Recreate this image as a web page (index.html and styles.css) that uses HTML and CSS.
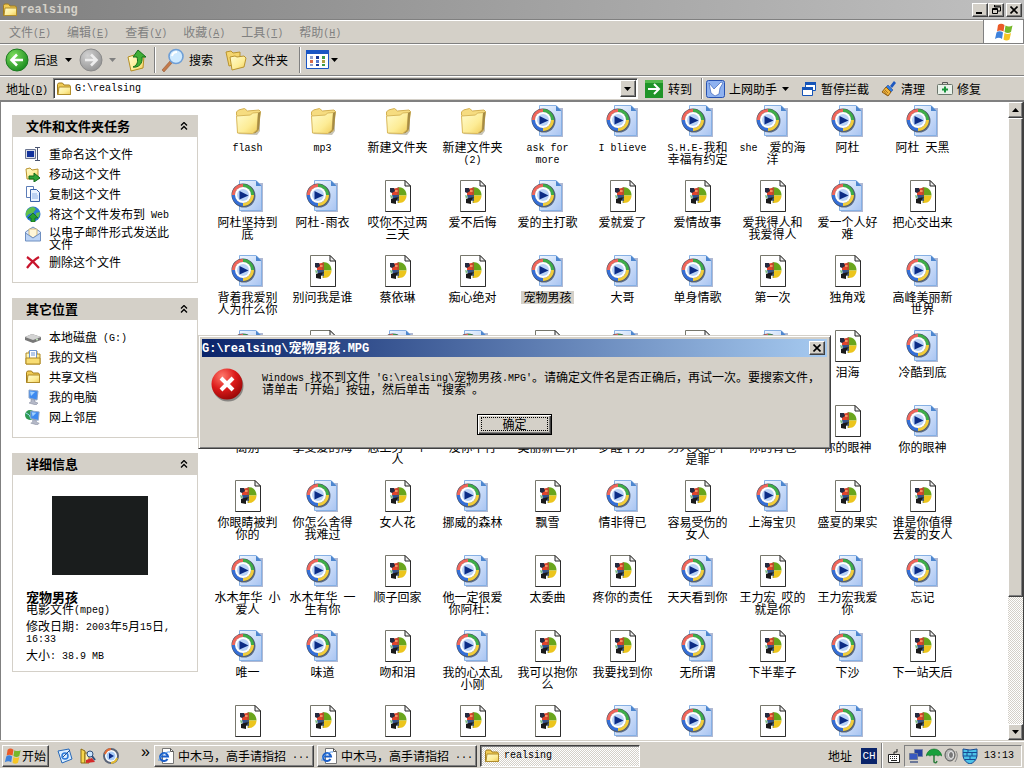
FILE: index.html
```html
<!DOCTYPE html>
<html lang="zh-CN">
<head>
    <meta charset="UTF-8">
    <meta name="viewport" content="width=device-width, initial-scale=1.0">
    <title>realsing</title>
    <link rel="stylesheet" href="styles.css">
</head>
<body>
    <!-- 图标 -->
    <svg class="sprite" aria-hidden="true">
        <defs>
            <linearGradient id="g-folder" x1="0" y1="0" x2="1" y2="1">
                <stop offset="0" stop-color="#fffcd0"/><stop offset="0.6" stop-color="#fdec95"/><stop offset="1" stop-color="#efcb58"/>
            </linearGradient>
            <linearGradient id="g-page" x1="0" y1="0" x2="1" y2="1">
                <stop offset="0" stop-color="#f0f7ff"/><stop offset="1" stop-color="#a9c4f2"/>
            </linearGradient>
            <radialGradient id="g-green" cx="0.35" cy="0.3" r="0.8">
                <stop offset="0" stop-color="#7ddc5c"/><stop offset="1" stop-color="#13861a"/>
            </radialGradient>
            <radialGradient id="g-gray" cx="0.35" cy="0.3" r="0.8">
                <stop offset="0" stop-color="#d2d2d2"/><stop offset="1" stop-color="#8f8f8f"/>
            </radialGradient>
            <radialGradient id="g-red" cx="0.35" cy="0.25" r="0.85">
                <stop offset="0" stop-color="#ff7a6c"/><stop offset="0.5" stop-color="#dc1a1a"/><stop offset="1" stop-color="#8c0404"/>
            </radialGradient>
        </defs>
        <symbol id="folder" viewBox="0 0 32 32">
            <path d="M7 29l19 1 3-4V9z" fill="#8f8a70" opacity=".5"/>
            <path d="M5.500 10V7l2-2 6-1.500 3 2.500 11.500-1 1.500 1.500L27 26l-5 2z" fill="#f6dc80" stroke="#d3b052"/>
            <path d="M5.500 11l14-1 2-2 6-.5L26 25l-4.500 3.500-15-.5z" fill="url(#g-folder)" stroke="#d9b85a"/>
            <path d="M27 8l2.500-1.500L28 24l-3.500 4-2 .5L26 25z" fill="#a58b45"/>
        </symbol>
        <symbol id="wmv" viewBox="0 0 32 32">
            <path d="M10 3h22v29H10z" fill="#6f7fae" opacity=".55"/>
            <path d="M8.500.5H25l5.500 5.500v24.500h-22z" fill="url(#g-page)" stroke="#86b0e4"/>
            <path d="M25 .5V6h5.500z" fill="#4d86cf"/>
            <circle cx="13" cy="16" r="11.500" fill="#27344c" opacity=".65"/>
            <circle cx="12" cy="15" r="11.500" fill="#465062"/>
            <g fill="none" stroke-width="3">
                <path d="M2.500 15A9.500 9.500 0 0 1 12 5.500" stroke="#f0655a"/>
                <path d="M12 5.500A9.500 9.500 0 0 1 21.500 15" stroke="#3eae48"/>
                <path d="M21.500 15A9.500 9.500 0 0 1 12 24.500" stroke="#f2cd3a"/>
                <path d="M12 24.500A9.500 9.500 0 0 1 2.500 15" stroke="#356fd8"/>
            </g>
            <circle cx="12" cy="15" r="8" fill="#fff"/>
            <circle cx="12" cy="15" r="6" fill="#b9d3f8"/>
            <path d="M8.500 11l9 4.500-9 4z" fill="#0c2c86"/>
        </symbol>
        <symbol id="mpg" viewBox="0 0 32 32">
            <path d="M4.500.5H24l5.500 5.500v25.500h-25z" fill="#fff" stroke="#77776c"/>
            <path d="M29.500 6v25.500h-25" fill="none" stroke="#2d2d2d"/>
            <path d="M24 .5V6h5.500z" fill="#eee" stroke="#222"/>
            <path d="M17 7.500c5-1 8.500 3 8.500 8H17z" fill="#69a51c"/>
            <path d="M17 15.500h8.500c0 4-3 8-8.500 7.500z" fill="#ecc51d"/>
            <path d="M11 9l7-1.500v7.500h-7z" fill="#e0452c"/>
            <path d="M11 15h7v6l-6-1z" fill="#35528e"/>
            <path d="M9 8h4l1 3-3 2-2-1z" fill="#242a40"/>
            <path d="M10 19l3-1 5-1-3 4v3l-5-1z" fill="#191919"/>
            <path d="M9 15l3 1-2 3z" fill="#7bbf7f"/>
            <path d="M14 10h3v2h-3z" fill="#ff8c62"/>
            <path d="M17 7v16" stroke="#5a6a30" stroke-width=".6"/>
        </symbol>
        <symbol id="dir" viewBox="0 0 16 16">
            <path d="M1.500 13.500v-10l1-1.500h4l1.500 2h5.500l1 1.500v8z" fill="#f0cb55" stroke="#a27c1b"/>
            <path d="M2 13.500l1-7.500h11.500v7.500z" fill="url(#g-folder)" stroke="#b18d2b"/>
        </symbol>
        <symbol id="winlogo" viewBox="0 0 20 20">
            <path d="M4 3q3-2.500 6.500 0L9.500 9.500Q6 7.500 3 9.500z" fill="#ea5a28"/>
            <path d="M11.500 3.500q3.500 2 7 0l-1.500 6.500q-3 2-6.500 0z" fill="#76b82a"/>
            <path d="M2.500 10.500q3-2.500 6.500 0l-1 6.500Q5 14.500 1 17z" fill="#3e82dc"/>
            <path d="M10.500 11q3 2 6.500 0l-1.500 6.500q-3 2-6 0z" fill="#f6c524"/>
        </symbol>
        <symbol id="down" viewBox="0 0 7 4"><path d="M0 0h7L3.500 4z" fill="currentColor"/></symbol>
        <symbol id="cross" viewBox="0 0 8 8"><path d="M.5.5l7 7M7.500.5l-7 7" stroke="#000" stroke-width="1.600"/></symbol>
        <symbol id="chevrons" viewBox="0 0 8 8"><path d="M1 3.500l3-3 3 3M1 7.500l3-3 3 3" fill="none" stroke="#000" stroke-width="1.300"/></symbol>
        <symbol id="ie" viewBox="0 0 16 16">
            <path d="M4.500.5h8l3 3v12h-11z" fill="#fff" stroke="#777"/>
            <path d="M12.500.5v3h3" fill="none" stroke="#555"/>
            <path d="M9.500 11A4 4 0 1 1 10 8.500H3" fill="none" stroke="#1b5fc9" stroke-width="2"/>
            <path d="M1 13C0 9 8 3 12 4" fill="none" stroke="#4c94ea"/>
        </symbol>
        <symbol id="monitor" viewBox="0 0 16 16">
            <path d="M4 1l9 1-1 9-8-2z" fill="#3d8af0" stroke="#8ea6c8"/>
            <path d="M5 2.500l5 .5-4 4z" fill="#9fd0ff"/>
            <path d="M6 10l4 1v2l3 1-2 2-7-2 2-1z" fill="#b4b9c8" stroke="#7c8296" stroke-width=".5"/>
        </symbol>
    </svg>

    <!-- 标题栏 -->
    <header class="titlebar">
        <svg class="i16"><use href="#dir"/></svg>
        <h1>realsing</h1>
        <div class="winbtns">
            <button class="winbtn" aria-label="最小化"><svg width="8" height="8"><path d="M0 6h6v2H0z"/></svg></button>
            <button class="winbtn" aria-label="还原"><svg width="9" height="9"><path d="M2.500 0v2h6v4H6M2 1h7" fill="none" stroke="#000"/><path d="M.5 3.500h5v5h-5zM0 4.500h6" fill="none" stroke="#000"/></svg></button>
            <button class="winbtn winclose" aria-label="关闭"><svg width="8" height="8"><use href="#cross"/></svg></button>
        </div>
    </header>

    <!-- 菜单栏 -->
    <nav class="menubar">
        <button>文件<span class="lat">(<u>F</u>)</span></button>
        <button>编辑<span class="lat">(<u>E</u>)</span></button>
        <button>查看<span class="lat">(<u>V</u>)</span></button>
        <button>收藏<span class="lat">(<u>A</u>)</span></button>
        <button>工具<span class="lat">(<u>T</u>)</span></button>
        <button>帮助<span class="lat">(<u>H</u>)</span></button>
        <div class="brand"><svg width="22" height="20"><use href="#winlogo"/></svg></div>
    </nav>

    <!-- 工具栏 -->
    <div class="toolbar">
        <button class="tool back">
            <svg width="24" height="24"><circle cx="12" cy="12" r="11" fill="url(#g-green)" stroke="#1c7a20"/><path d="M18 12H7M12 6.500L6.500 12l5.500 5.500" fill="none" stroke="#fff" stroke-width="2.600"/></svg>
            后退
            <svg class="arrow"><use href="#down"/></svg>
        </button>
        <button class="tool forward" aria-label="前进">
            <svg width="24" height="24"><circle cx="12" cy="12" r="11" fill="url(#g-gray)" stroke="#8a8a8a"/><path d="M6 12h11M12 6.500l5.500 5.500-5.500 5.500" fill="none" stroke="#eee" stroke-width="2.600"/></svg>
            <svg class="arrow"><use href="#down"/></svg>
        </button>
        <button class="tool up" aria-label="向上">
            <svg width="22" height="24"><path d="M2 9l6-2 2 2 8-1-1 12-12 3z" fill="url(#g-folder)" stroke="#b58e22"/><path d="M7 19c5-2 5-6 4-10H7l5-7 8 7h-4c1 6-3 11-9 10z" fill="#3fae35" stroke="#13701a"/></svg>
        </button>
        <span class="sep"></span>
        <button class="tool search">
            <svg width="24" height="24"><path d="M1 22l8-9 2 2-8 9z" fill="#c47a4a" stroke="#8a4f2c" stroke-width=".5"/><circle cx="15" cy="8.500" r="7" fill="#cfeaff" stroke="#6f9fd6" stroke-width="1.600"/><path d="M11 8q1-4 5-4" fill="none" stroke="#fff" stroke-width="2"/></svg>
            搜索
        </button>
        <button class="tool folders">
            <svg width="22" height="22"><path d="M1 3l5-1 2 2 7-1v11L4 17z" fill="#f4d56e" stroke="#b9932e"/><path d="M5 8l5-1 2 1 7-1 2 2-2 9-12 3z" fill="url(#g-folder)" stroke="#b9932e"/></svg>
            文件夹
        </button>
        <span class="sep"></span>
        <button class="tool views" aria-label="查看">
            <svg width="24" height="20"><path d="M.5.5h22v18H.5z" fill="#fff" stroke="#1a56c4"/><path d="M0 0h23v4H0z" fill="#1a56c4"/><path d="M4 6h3v3H4zM4 14h3v2H4z" fill="#8ca0d0"/><path d="M4 10h3v3H4z" fill="#d86a4a"/><path d="M10 6h3v3h-3zM10 14h3v2h-3z" fill="#1a3a9a"/><path d="M10 10h3v3h-3z" fill="#5577c9"/><path d="M16 6h3v3h-3zM16 14h3v2h-3z" fill="#3a9a4a"/><path d="M16 10h3v3h-3z" fill="#b0a040"/></svg>
            <svg class="arrow"><use href="#down"/></svg>
        </button>
    </div>

    <!-- 地址栏 -->
    <div class="addressbar">
        <label for="address">地址<span class="lat">(<u>D</u>)</span></label>
        <div class="address-box">
            <svg class="i16"><use href="#dir"/></svg>
            <input type="text" id="address" value="G:\realsing">
            <button class="drop" aria-label="展开"><svg class="arrow"><use href="#down"/></svg></button>
        </div>
        <button class="tool go">
            <svg width="18" height="18"><path d="M0 0h18v18H0z" fill="#1f9428"/><path d="M0 0h18v3H0z" fill="#54b84d"/><path d="M3 9h11M9 4l5 5-5 5" fill="none" stroke="#fff" stroke-width="2"/></svg>
            转到
        </button>
        <span class="sep"></span>
        <button class="tool helper">
            <svg width="19" height="18"><rect x=".5" y=".5" width="18" height="17" rx="2" fill="#8fb2f0" stroke="#2852b0"/><path d="M3 3l5 6 7-7 2 1-3 5-1 6-4 2-4-3z" fill="#fff" stroke="#2852b0" stroke-width=".6"/></svg>
            上网助手
            <svg class="arrow"><use href="#down"/></svg>
        </button>
        <button class="tool">
            <svg class="i16"><path d="M4.500 1.500h10v8h-10z" fill="#fff" stroke="#1554b8"/><path d="M4 1h11v3H4z" fill="#1554b8"/><path d="M1.500 6.500h10v8h-10z" fill="#fff" stroke="#1554b8"/><path d="M1 6h11v3H1z" fill="#1554b8"/></svg>
            暂停拦截
        </button>
        <button class="tool">
            <svg class="i16"><path d="M13 0l2 2-4 5-2-2z" fill="#1d58c0"/><path d="M7 4l5 5-2 2-5-5z" fill="#2f7be0" stroke="#143f94" stroke-width=".5"/><path d="M5 6l5 5-3 4L1 11z" fill="#f0b43c" stroke="#8b5a12"/><path d="M4 9l3 3M3 10l3 4" stroke="#8b5a12" stroke-width=".7"/></svg>
            清理
        </button>
        <button class="tool">
            <svg class="i16"><path d="M5.500 3V1.500h5V3" fill="none" stroke="#555"/><rect x=".5" y="3.500" width="15" height="10" rx="1" fill="#e9f2ea" stroke="#6b756b"/><path d="M8 5.500v6M5 8.500h6" stroke="#18943a" stroke-width="2"/></svg>
            修复
        </button>
    </div>

    <main class="content">
        <!-- 左侧任务面板 -->
        <aside class="sidebar">
            <section class="panel">
                <h2>文件和文件夹任务 <svg width="8" height="8"><use href="#chevrons"/></svg></h2>
                <ul>
                    <li><svg class="i16"><path d="M.5 3.500h10v9H.5z" fill="#d8dce8" stroke="#6c7690"/><path d="M2 5h7v6H2z" fill="#12329c"/><path d="M10 1.500h5M12.500 2v12M10 14.500h5" stroke="#4a5470"/></svg><a href="#">重命名这个文件</a></li>
                    <li><svg class="i16"><path d="M1 3l4-1 2 2 6-1v10H2z" fill="url(#g-folder)" stroke="#b9932e"/><path d="M4 10h5V7l6 5-6 4v-3H4z" fill="#2fa336" stroke="#116a18"/></svg><a href="#">移动这个文件</a></li>
                    <li><svg class="i16"><path d="M1.500.5h7v11h-7z" fill="#fff" stroke="#5c7db8"/><path d="M5.500 3.500h6l3 3v9h-9z" fill="#eaf3ff" stroke="#3a62a8"/><path d="M7 8h5M7 10h6M7 12h6" stroke="#8db0e6"/></svg><a href="#">复制这个文件</a></li>
                    <li><svg class="i16"><circle cx="8" cy="8" r="7.500" fill="#2c78d4"/><path d="M3 3q5-4 8 0l-3 4-4 1-3 3Q0 6 3 3zM11 7l4-1q0 4-3 7z" fill="#5fc04c"/><path d="M8 7l5 5h-3v4H6v-4H3z" fill="#27a030" stroke="#0f6417" stroke-width=".7"/></svg><a href="#">将这个文件发布到<span class="lat"> Web</span></a></li>
                    <li><svg class="i16"><path d="M.5 6L8 1l7.500 5v8.500H.5z" fill="#dce8fa" stroke="#6f8fc0"/><path d="M4 3h8v6l-4 3-4-3z" fill="#fff6d8" stroke="#c4a35a" stroke-width=".7"/><path d="M.5 7L8 12l7.500-5v8H.5z" fill="#bcd4f6" stroke="#6f8fc0"/></svg><a href="#">以电子邮件形式发送此文件</a></li>
                    <li><svg class="i16"><path d="M2 3q6 4 12 11M14 3Q7 7 2 14" fill="none" stroke="#c8142c" stroke-width="2.200"/></svg><a href="#">删除这个文件</a></li>
                </ul>
            </section>
            <section class="panel">
                <h2>其它位置 <svg width="8" height="8"><use href="#chevrons"/></svg></h2>
                <ul>
                    <li><svg class="i16"><path d="M0 8l7-3 9 3v3l-8 3-8-3z" fill="#777"/><path d="M0 8l7-3 9 3-8 3z" fill="#d3d3d3"/><circle cx="12" cy="10.500" r="1" fill="#c8e8c0"/></svg><a href="#">本地磁盘<span class="lat"> (G:)</span></a></li>
                    <li><svg class="i16"><path d="M1 4h3V2h8v3h3v10H1z" fill="url(#g-folder)" stroke="#b08a22"/><path d="M4.500 1.500h7v8h-7z" fill="#fff" stroke="#6d95d2"/><path d="M6 4h4M6 6h4" stroke="#6d95d2"/><path d="M1 9h14v6H1z" fill="#f8dd74" stroke="#b08a22"/></svg><a href="#">我的文档</a></li>
                    <li><svg class="i16"><use href="#dir"/></svg><a href="#">共享文档</a></li>
                    <li><svg class="i16"><use href="#monitor"/></svg><a href="#">我的电脑</a></li>
                    <li><svg class="i16"><circle cx="5" cy="6" r="5" fill="#2e9a52"/><path d="M1 4q4 1 5 6" stroke="#9bd8f0" fill="none"/><use href="#monitor" x="2" y="1" width="15" height="15"/></svg><a href="#">网上邻居</a></li>
                </ul>
            </section>
            <section class="panel">
                <h2>详细信息 <svg width="8" height="8"><use href="#chevrons"/></svg></h2>
                <div class="details">
                    <div class="thumb"></div>
                    <h3>宠物男孩</h3>
                    <p>电影文件<span class="lat">(mpeg)</span></p>
                    <p>修改日期<span class="lat">: 2003</span>年<span class="lat">5</span>月<span class="lat">15</span>日<span class="lat">, 16:33</span></p>
                    <p>大小<span class="lat">: 38.9 MB</span></p>
                </div>
            </section>
        </aside>

        <!-- 文件列表 -->
        <ul class="files">
            <li><svg><use href="#folder"/></svg><a href="#"><span class="lat">flash</span></a></li>
            <li><svg><use href="#folder"/></svg><a href="#"><span class="lat">mp3</span></a></li>
            <li><svg><use href="#folder"/></svg><a href="#">新建文件夹</a></li>
            <li><svg><use href="#folder"/></svg><a href="#">新建文件夹 <span class="lat">(2)</span></a></li>
            <li><svg><use href="#wmv"/></svg><a href="#"><span class="lat">ask for more</span></a></li>
            <li><svg><use href="#wmv"/></svg><a href="#"><span class="lat">I blieve</span></a></li>
            <li><svg><use href="#wmv"/></svg><a href="#"><span class="lat">S.H.E-</span>我和幸福有约定</a></li>
            <li><svg><use href="#wmv"/></svg><a href="#"><span class="lat">she&nbsp;&nbsp;</span>爱的海洋</a></li>
            <li><svg><use href="#wmv"/></svg><a href="#">阿杜</a></li>
            <li><svg><use href="#wmv"/></svg><a href="#">阿杜<span class="lat"> </span>天黑</a></li>

            <li><svg><use href="#wmv"/></svg><a href="#">阿杜坚持到底</a></li>
            <li><svg><use href="#wmv"/></svg><a href="#">阿杜<span class="lat">-</span>雨衣</a></li>
            <li><svg><use href="#mpg"/></svg><a href="#">哎你不过两三天</a></li>
            <li><svg><use href="#mpg"/></svg><a href="#">爱不后悔</a></li>
            <li><svg><use href="#wmv"/></svg><a href="#">爱的主打歌</a></li>
            <li><svg><use href="#mpg"/></svg><a href="#">爱就爱了</a></li>
            <li><svg><use href="#mpg"/></svg><a href="#">爱情故事</a></li>
            <li><svg><use href="#mpg"/></svg><a href="#">爱我得人和我爱得人</a></li>
            <li><svg><use href="#wmv"/></svg><a href="#">爱一个人好难</a></li>
            <li><svg><use href="#mpg"/></svg><a href="#">把心交出来</a></li>

            <li><svg><use href="#wmv"/></svg><a href="#">背着我爱别人为什么你</a></li>
            <li><svg><use href="#mpg"/></svg><a href="#">别问我是谁</a></li>
            <li><svg><use href="#mpg"/></svg><a href="#">蔡依琳</a></li>
            <li><svg><use href="#mpg"/></svg><a href="#">痴心绝对</a></li>
            <li><svg><use href="#wmv"/></svg><a href="#" class="selected">宠物男孩</a></li>
            <li><svg><use href="#wmv"/></svg><a href="#">大哥</a></li>
            <li><svg><use href="#wmv"/></svg><a href="#">单身情歌</a></li>
            <li><svg><use href="#mpg"/></svg><a href="#">第一次</a></li>
            <li><svg><use href="#mpg"/></svg><a href="#">独角戏</a></li>
            <li><svg><use href="#wmv"/></svg><a href="#">高峰美丽新世界</a></li>

            <li><svg><use href="#wmv"/></svg></li>
            <li><svg><use href="#mpg"/></svg></li>
            <li><svg><use href="#wmv"/></svg></li>
            <li><svg><use href="#wmv"/></svg></li>
            <li><svg><use href="#mpg"/></svg></li>
            <li><svg><use href="#wmv"/></svg></li>
            <li><svg><use href="#mpg"/></svg></li>
            <li><svg><use href="#wmv"/></svg></li>
            <li><svg><use href="#mpg"/></svg><a href="#">泪海</a></li>
            <li><svg><use href="#wmv"/></svg><a href="#">冷酷到底</a></li>

            <li><svg><use href="#mpg"/></svg><a href="#">离别</a></li>
            <li><svg><use href="#mpg"/></svg><a href="#">享受爱的海</a></li>
            <li><svg><use href="#mpg"/></svg><a href="#">恋上另一个人</a></li>
            <li><svg><use href="#mpg"/></svg><a href="#">没你不行</a></li>
            <li><svg><use href="#mpg"/></svg><a href="#">美丽新世界</a></li>
            <li><svg><use href="#mpg"/></svg><a href="#">梦醒十分</a></li>
            <li><svg><use href="#mpg"/></svg><a href="#">男人哭吧不是罪</a></li>
            <li><svg><use href="#mpg"/></svg><a href="#">你的背包</a></li>
            <li><svg><use href="#mpg"/></svg><a href="#">你的眼神</a></li>
            <li><svg><use href="#wmv"/></svg><a href="#">你的眼神</a></li>

            <li><svg><use href="#mpg"/></svg><a href="#">你眼睛被判你的</a></li>
            <li><svg><use href="#wmv"/></svg><a href="#">你怎么舍得我难过</a></li>
            <li><svg><use href="#mpg"/></svg><a href="#">女人花</a></li>
            <li><svg><use href="#wmv"/></svg><a href="#">挪威的森林</a></li>
            <li><svg><use href="#mpg"/></svg><a href="#">飘雪</a></li>
            <li><svg><use href="#wmv"/></svg><a href="#">情非得已</a></li>
            <li><svg><use href="#mpg"/></svg><a href="#">容易受伤的女人</a></li>
            <li><svg><use href="#wmv"/></svg><a href="#">上海宝贝</a></li>
            <li><svg><use href="#mpg"/></svg><a href="#">盛夏的果实</a></li>
            <li><svg><use href="#mpg"/></svg><a href="#">谁是你值得去爱的女人</a></li>

            <li><svg><use href="#wmv"/></svg><a href="#">水木年华<span class="lat"> </span>小爱人</a></li>
            <li><svg><use href="#wmv"/></svg><a href="#">水木年华<span class="lat"> </span>一生有你</a></li>
            <li><svg><use href="#mpg"/></svg><a href="#">顺子回家</a></li>
            <li><svg><use href="#wmv"/></svg><a href="#">他一定很爱你阿杜：</a></li>
            <li><svg><use href="#mpg"/></svg><a href="#">太委曲</a></li>
            <li><svg><use href="#mpg"/></svg><a href="#">疼你的责任</a></li>
            <li><svg><use href="#wmv"/></svg><a href="#">天天看到你</a></li>
            <li><svg><use href="#mpg"/></svg><a href="#">王力宏<span class="lat"> </span>哎的就是你</a></li>
            <li><svg><use href="#wmv"/></svg><a href="#">王力宏我爱你</a></li>
            <li><svg><use href="#wmv"/></svg><a href="#">忘记</a></li>

            <li><svg><use href="#wmv"/></svg><a href="#">唯一</a></li>
            <li><svg><use href="#wmv"/></svg><a href="#">味道</a></li>
            <li><svg><use href="#mpg"/></svg><a href="#">吻和泪</a></li>
            <li><svg><use href="#wmv"/></svg><a href="#">我的心太乱小刚</a></li>
            <li><svg><use href="#mpg"/></svg><a href="#">我可以抱你么</a></li>
            <li><svg><use href="#mpg"/></svg><a href="#">我要找到你</a></li>
            <li><svg><use href="#wmv"/></svg><a href="#">无所谓</a></li>
            <li><svg><use href="#mpg"/></svg><a href="#">下半辈子</a></li>
            <li><svg><use href="#wmv"/></svg><a href="#">下沙</a></li>
            <li><svg><use href="#mpg"/></svg><a href="#">下一站天后</a></li>

            <li><svg><use href="#mpg"/></svg></li>
            <li><svg><use href="#mpg"/></svg></li>
            <li><svg><use href="#mpg"/></svg></li>
            <li><svg><use href="#mpg"/></svg></li>
            <li><svg><use href="#mpg"/></svg></li>
            <li><svg><use href="#wmv"/></svg></li>
            <li><svg><use href="#wmv"/></svg></li>
            <li><svg><use href="#mpg"/></svg></li>
            <li><svg><use href="#wmv"/></svg></li>
            <li><svg><use href="#mpg"/></svg></li>
        </ul>

        <div class="scrollbar">
            <button class="scroll-btn scroll-up" aria-label="向上滚动"><svg class="arrow"><use href="#down"/></svg></button>
            <div class="scroll-track"><div class="scroll-thumb"></div></div>
            <button class="scroll-btn" aria-label="向下滚动"><svg class="arrow"><use href="#down"/></svg></button>
        </div>
    </main>

    <!-- 错误对话框 -->
    <div class="dialog" role="alertdialog" aria-labelledby="dialog-title">
        <div class="dialog-title">
            <h2 id="dialog-title"><span>G:\realsing\</span>宠物男孩<span>.MPG</span></h2>
            <button class="winbtn" aria-label="关闭"><svg width="8" height="8"><use href="#cross"/></svg></button>
        </div>
        <div class="dialog-body">
            <svg width="34" height="34"><circle cx="17" cy="18" r="15.500" fill="#555" opacity=".6"/><circle cx="16" cy="16" r="15.500" fill="url(#g-red)"/><path d="M10 10l12 12M22 10L10 22" stroke="#fff" stroke-width="4"/></svg>
            <p><span class="lat">Windows </span>找不到文件<span class="lat"> 'G:\realsing\</span>宠物男孩<span class="lat">.MPG'</span>。请确定文件名是否正确后，再试一次。要搜索文件，<br>请单击「开始」按钮，然后单击“搜索”。</p>
        </div>
        <button class="ok"><span>确定</span></button>
    </div>

    <!-- 任务栏 -->
    <footer class="taskbar">
        <button class="start"><svg width="18" height="18"><use href="#winlogo"/></svg>开始</button>
        <div class="quick">
            <svg class="i16"><path d="M1 3l11-2 3 10-10 4z" fill="#d9edff" stroke="#2668b8"/><circle cx="8" cy="8" r="3" fill="none" stroke="#2d7ad8" stroke-width="1.500"/><path d="M6 9l7-7" stroke="#1d4f92"/></svg>
            <svg class="i16"><path d="M1 1l4 2v12H1z" fill="#f6d64c" stroke="#8b6c10"/><path d="M5 5h4v10H5z" fill="#fff1b0" stroke="#8b6c10"/><path d="M6 15l9-1-3-4-6 2z" fill="#d42a2a"/><circle cx="10" cy="6" r="3" fill="#cce6ff" stroke="#34507c"/><path d="M12 8l3 4" stroke="#34507c" stroke-width="2"/></svg>
            <svg class="i16"><circle cx="8" cy="8" r="7" fill="#fff" stroke="#5a6478" stroke-width="2"/><path d="M2 6a7 7 0 0 1 6-5" fill="none" stroke="#e66b32" stroke-width="2"/><path d="M8 15a7 7 0 0 0 6-5" fill="none" stroke="#e4bb32" stroke-width="2"/><circle cx="8" cy="8" r="4.500" fill="#a9cdf8"/><path d="M6 5l5 3-5 3z" fill="#0c2c86"/></svg>
        </div>
        <span class="more">»</span>
        <div class="tasks">
            <button class="task"><svg class="i16"><use href="#ie"/></svg>中木马，高手请指招<span class="lat"> ...</span></button>
            <button class="task"><svg class="i16"><use href="#ie"/></svg>中木马，高手请指招<span class="lat"> ...</span></button>
            <button class="task active"><svg class="i16"><use href="#dir"/></svg><span class="lat">realsing</span></button>
        </div>
        <span class="tray-label">地址</span>
        <span class="lang">CH</span>
        <span class="sep"></span>
        <svg class="keyboard" width="12" height="14"><path d="M6 5V3h3V0" fill="none" stroke="#222"/><path d="M.5 5.500h11v8H.5z" fill="#fff" stroke="#222"/><path d="M2 7.500h8M2 9.500h8" stroke="#222" stroke-dasharray="1 1"/><path d="M3 11.500h6" stroke="#222"/></svg>
        <div class="tray">
            <svg class="i16"><path d="M6.500 1.500h8v7h-8z" fill="#2440a0" stroke="#7480a8"/><path d="M1.500 5.500h8v6h-8z" fill="#3858c0" stroke="#6c7898"/><path d="M2 13h8v2H2z" fill="#6c7898"/></svg>
            <svg class="i16"><path d="M0 8Q2 1 8 1t8 7q-2-2-4 0-2-2-4 0-2-2-4 0-2-2-4 0z" fill="#18a03c" stroke="#0c6c26" stroke-width=".6"/><path d="M8 7v7q2 2 3-1" fill="none" stroke="#2c7c3c" stroke-width="1.500"/></svg>
            <svg class="i16"><ellipse cx="6" cy="7" rx="5" ry="6" fill="#b8b8b8" stroke="#555"/><ellipse cx="7" cy="7" rx="2.500" ry="3.500" fill="#777" stroke="#eee"/><path d="M12 3q3 5-1 11" fill="none" stroke="#888"/></svg>
            <svg class="i16"><path d="M1 1q7 2 14 0v7q-1 6-7 8-6-2-7-8z" fill="#4cc2e8" stroke="#164a94"/><path d="M1 4.500h14M1 8h14M3 11.500h10M6 2v2M10 5v3M5 5v3M8 8v3" stroke="#164a94"/></svg>
            <time class="lat">13:13</time>
        </div>
    </footer>
</body>
</html>
```
FILE: styles.css
```css
* {
    box-sizing: border-box;
}
body {
    margin: 0;
    height: 100vh;
    display: flex;
    flex-direction: column;
    overflow: hidden;
    position: relative;
    background: #d4d0c8;
    color: #000;
    font-family: "Noto Sans CJK SC", sans-serif;
    font-size: 12px;
    line-height: 12px;
}
h1, h2, h3, p, ul {
    margin: 0;
    padding: 0;
    list-style: none;
}
a {
    color: inherit;
    text-decoration: none;
}
button {
    font: inherit;
    color: inherit;
    padding: 0;
    border: none;
    background: none;
    white-space: nowrap;
}
svg {
    display: block;
    flex-shrink: 0;
}
.sprite {
    position: absolute;
    width: 0;
    height: 0;
}
/* 英文和数字用等宽字体，宽度是汉字的一半 */
.lat {
    font-family: "Liberation Mono", monospace;
    font-size: 10px;
    line-height: 0;
    vertical-align: 1px;
}
.i16 {
    width: 16px;
    height: 16px;
}
.arrow {
    width: 7px;
    height: 4px;
}
.sep {
    width: 2px;
    align-self: stretch;
    border-left: 1px solid #808080;
    border-right: 1px solid #fff;
}

/* 标题栏 */
.titlebar {
    display: flex;
    align-items: center;
    height: 19px;
    padding: 0 2px;
    gap: 2px;
    background: linear-gradient(to right, #808080, #c0c0c0);
    color: #d4d0c8;
}
.titlebar h1 {
    flex: 1;
    font: bold 12px/14px "Liberation Mono", monospace;
}
.winbtns {
    display: flex;
}
.winbtn {
    display: flex;
    align-items: center;
    justify-content: center;
    width: 16px;
    height: 14px;
    background: #d4d0c8;
    border: 1px solid;
    border-color: #fff #404040 #404040 #fff;
    box-shadow: inset -1px -1px #808080;
}
.winclose {
    margin-left: 2px;
}

/* 菜单栏 */
.menubar {
    display: flex;
    align-items: center;
    gap: 16px;
    height: 25px;
    padding-left: 9px;
    border-top: 1px solid #808080;
    border-bottom: 1px solid #808080;
    box-shadow: inset 0 1px #fff;
    color: #808080;
}
.brand {
    display: flex;
    align-items: center;
    justify-content: center;
    align-self: stretch;
    width: 41px;
    margin-left: auto;
    background: #fff;
    border-left: 1px solid #808080;
    border-right: 1px solid #808080;
}

/* 工具栏 */
.toolbar {
    display: flex;
    align-items: center;
    height: 32px;
    padding: 2px 5px;
    border-top: 1px solid #fff;
    border-bottom: 1px solid #808080;
}
.tool {
    display: flex;
    align-items: center;
    gap: 4px;
}
.back {
    gap: 5px;
}
.back .arrow {
    margin-left: 2px;
}
.forward {
    margin-left: 7px;
    gap: 6px;
    color: #808080;
}
.up {
    margin: 0 6px 0 10px;
}
.search {
    margin-left: 5px;
}
.folders {
    margin: 0 11px 0 12px;
    gap: 5px;
}
.views {
    margin-left: 5px;
    gap: 1px;
}

/* 地址栏 */
.addressbar {
    display: flex;
    align-items: center;
    height: 26px;
    padding: 1px 43px 1px 6px;
    border-top: 1px solid #fff;
    border-bottom: 2px solid #808080;
}
.address-box {
    flex: 1;
    display: flex;
    align-items: center;
    height: 21px;
    margin: 0 7px 0 5px;
    padding: 1px 1px 1px 2px;
    background: #fff;
    border: 1px solid;
    border-color: #808080 #fff #fff #808080;
    box-shadow: inset 1px 1px #404040;
}
.address-box input {
    flex: 1;
    min-width: 0;
    padding: 1px 3px 0;
    border: none;
    outline: none;
    font: 10px/12px "Liberation Mono", monospace;
}
.drop,
.scroll-btn {
    display: flex;
    align-items: center;
    justify-content: center;
    width: 16px;
    height: 17px;
    background: #d4d0c8;
    border: 1px solid;
    border-color: #fff #404040 #404040 #fff;
    box-shadow: inset -1px -1px #808080;
}
.go {
    margin-right: 9px;
    gap: 5px;
}
.helper {
    margin-left: 3px;
}
.helper .arrow {
    margin-left: 1px;
}
.addressbar .tool + .tool {
    margin-left: 12px;
}

/* 主区域 */
.content {
    flex: 1;
    min-height: 0;
    display: flex;
    overflow: hidden;
    background: #fff;
    border-left: 1px solid #808080;
    border-right: 1px solid #404040;
}
.sidebar {
    display: flex;
    flex-direction: column;
    gap: 15px;
    width: 197px;
    padding: 13px 0 0 11px;
}
.panel {
    border: 1px solid #d4d0c8;
    border-top: none;
}
.panel h2 {
    display: flex;
    align-items: center;
    justify-content: space-between;
    height: 22px;
    padding: 0 9px 0 13px;
    background: #d4d0c8;
    font-size: 13px;
}
.panel ul {
    display: flex;
    flex-direction: column;
    gap: 4px;
    padding: 9px 24px 12px 12px;
}
.panel li {
    display: flex;
    align-items: flex-start;
    gap: 8px;
}
.panel li a {
    align-self: center;
}
.details {
    padding: 21px 13px 5px;
}
.thumb {
    width: 96px;
    height: 79px;
    margin: 0 auto 16px 26px;
    background: #1a1d1d;
}
.details h3 {
    font-size: 13px;
    line-height: 12px;
}
.details p {
    margin-bottom: 5px;
}

/* 文件列表 */
.files {
    flex: 1;
    display: grid;
    grid-template-columns: repeat(auto-fill, 75px);
    grid-auto-rows: 75px;
    align-content: start;
    padding: 3px 0 0 12px;
}
.files li {
    padding: 0 4px;
    text-align: center;
}
.files svg {
    width: 32px;
    height: 32px;
    margin: 0 17px 4px;
}
.files .selected {
    display: inline-block;
    padding: 0 2px 1px;
    background: #d4d0c8;
}

/* 滚动条 */
.scrollbar {
    display: flex;
    flex-direction: column;
    width: 15px;
}
.scroll-btn {
    width: 15px;
    height: 16px;
}
.scroll-up svg {
    transform: rotate(180deg);
}
.scroll-track,
.task.active {
    background: repeating-conic-gradient(#fff 0 25%, #d4d0c8 0 50%) 0 0 / 2px 2px;
}
.scroll-track {
    flex: 1;
}
.scroll-thumb {
    height: 79%;
    background: #d4d0c8;
    border: 1px solid;
    border-color: #fff #404040 #404040 #fff;
    box-shadow: inset -1px -1px #808080;
}

/* 对话框 */
.dialog {
    position: absolute;
    left: 198px;
    top: 335px;
    width: 633px;
    padding: 3px;
    background: #d4d0c8;
    border: 1px solid;
    border-color: #d4d0c8 #404040 #404040 #d4d0c8;
    box-shadow: inset 1px 1px #fff, inset -1px -1px #808080;
}
.dialog-title {
    display: flex;
    align-items: center;
    justify-content: space-between;
    height: 18px;
    padding-right: 2px;
    background: linear-gradient(to right, #0a246a, #a6caf0);
    color: #fff;
}
.dialog-title h2 {
    font-size: 13px;
    line-height: 14px;
}
.dialog-title span {
    font-family: "Liberation Mono", monospace;
    font-size: 12px;
}
.dialog-body {
    display: flex;
    gap: 17px;
    padding: 11px 0 0 9px;
}
.dialog-body p {
    padding-top: 3px;
    white-space: nowrap;
}
.ok {
    display: block;
    width: 75px;
    height: 21px;
    margin: 12px auto 10px;
    padding: 2px;
    border: 1px solid #000;
    box-shadow: inset 1px 1px #fff, inset -1px -1px #404040, inset -2px -2px #808080;
}
.ok span {
    display: block;
    margin: 0 1px 1px;
    border: 1px dotted #000;
}

/* 任务栏 */
.taskbar {
    display: flex;
    align-items: center;
    height: 28px;
    padding: 2px 2px 0;
    border-top: 1px solid #d4d0c8;
    box-shadow: inset 0 1px #fff;
}
.start,
.task {
    display: flex;
    align-items: center;
    height: 22px;
    border: 1px solid;
    border-color: #fff #404040 #404040 #fff;
    box-shadow: inset -1px -1px #808080;
}
.start {
    width: 47px;
    padding-left: 1px;
}
.quick {
    display: flex;
    gap: 7px;
    margin-left: 8px;
}
.more {
    margin: 0 5px 8px 22px;
    width: 8px;
    font-family: "Liberation Sans", sans-serif;
    font-size: 16px;
}
.tasks {
    flex: 1;
    display: flex;
    gap: 3px;
}
.task {
    width: 160px;
    padding-left: 3px;
    white-space: pre;
}
.task svg {
    margin-right: 4px;
}
.task.active {
    border-color: #404040 #fff #fff #404040;
    box-shadow: inset 1px 1px #808080;
}
.lang {
    margin: 0 4px 0 9px;
    width: 16px;
    background: #0a246a;
    color: #fff;
    font: 11px/16px "Liberation Mono", monospace;
    text-align: center;
}
.keyboard {
    margin: 0 4px 0 5px;
}
.tray {
    display: flex;
    align-items: center;
    gap: 2px;
    height: 22px;
    padding: 0 7px 0 3px;
    border: 1px solid;
    border-color: #808080 #fff #fff #808080;
}
.tray time {
    margin-left: 4px;
}
```
